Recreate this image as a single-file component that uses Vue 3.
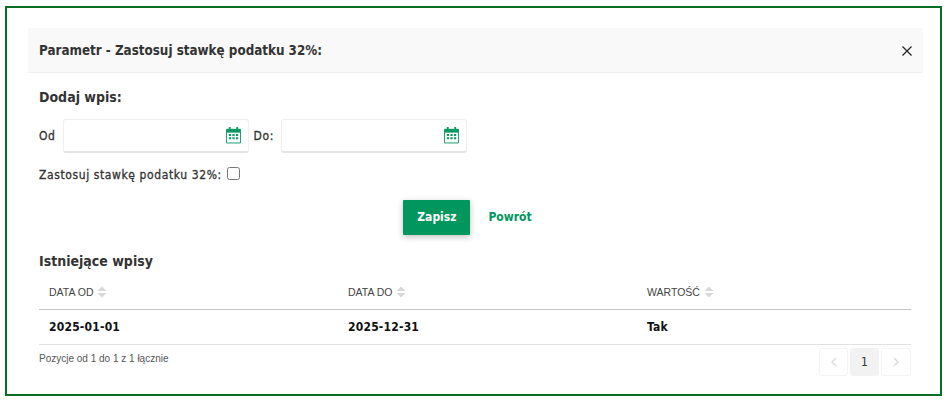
<template>
  <div class="frame">
    <div class="modal">
      <div class="modal-header">
        <span class="modal-title">Parametr - Zastosuj stawkę podatku 32%:</span>
        <button class="close-btn" aria-label="Zamknij">
          <svg width="10" height="10" viewBox="0 0 10 10">
            <path d="M0.5 0.5L9.5 9.5M9.5 0.5L0.5 9.5" stroke="#222" stroke-width="1.2" fill="none" />
          </svg>
        </button>
      </div>

      <div class="modal-body">
        <h3 class="section-title">Dodaj wpis:</h3>

        <div class="date-row">
          <label class="field-label">Od</label>
          <div class="date-input">
            <svg class="cal" width="15" height="18" viewBox="0 0 16 18">
              <path d="M0.5 3h15v14.5H0.5z" fill="#fff" stroke="#0d9a62" />
              <path d="M0.5 2.5h15V6.5H0.5z" fill="#0d9a62" />
              <path d="M4 0.5v3M12 0.5v3" stroke="#0d9a62" stroke-width="2" />
              <path d="M3 8h2.4v2H3zM6.8 8h2.4v2H6.8zM10.6 8H13v2h-2.4zM3 11.4h2.4v2H3zM6.8 11.4h2.4v2H6.8zM10.6 11.4H13v2h-2.4z" fill="#0d9a62" />
            </svg>
          </div>
          <label class="field-label">Do:</label>
          <div class="date-input">
            <svg class="cal" width="15" height="18" viewBox="0 0 16 18">
              <path d="M0.5 3h15v14.5H0.5z" fill="#fff" stroke="#0d9a62" />
              <path d="M0.5 2.5h15V6.5H0.5z" fill="#0d9a62" />
              <path d="M4 0.5v3M12 0.5v3" stroke="#0d9a62" stroke-width="2" />
              <path d="M3 8h2.4v2H3zM6.8 8h2.4v2H6.8zM10.6 8H13v2h-2.4zM3 11.4h2.4v2H3zM6.8 11.4h2.4v2H6.8zM10.6 11.4H13v2h-2.4z" fill="#0d9a62" />
            </svg>
          </div>
        </div>

        <div class="check-row">
          <label class="field-label">Zastosuj stawkę podatku 32%:</label>
          <input type="checkbox" class="check" />
        </div>

        <div class="actions">
          <button class="btn-save">Zapisz</button>
          <button class="btn-back">Powrót</button>
        </div>

        <h3 class="section-title list-title">Istniejące wpisy</h3>

        <table class="entries">
          <colgroup>
            <col class="col-wide" />
            <col class="col-wide" />
            <col />
          </colgroup>
          <thead>
            <tr>
              <th v-for="col in columns" :key="col">
                {{ col }}
                <svg class="sort" width="10" height="12" viewBox="0 0 10 12">
                  <path d="M5 0.5L9.5 5H0.5z" fill="#d8d8d8" />
                  <path d="M5 11.5L9.5 7H0.5z" fill="#d8d8d8" />
                </svg>
              </th>
            </tr>
          </thead>
          <tbody>
            <tr v-for="row in rows" :key="row.from">
              <td>{{ row.from }}</td>
              <td>{{ row.to }}</td>
              <td>{{ row.value }}</td>
            </tr>
          </tbody>
        </table>

        <div class="table-footer">
          <span class="info">Pozycje od 1 do 1 z 1 łącznie</span>
          <div class="pager">
            <span class="page nav">
              <svg width="6" height="10" viewBox="0 0 6 10"><path d="M5 1L1 5l4 4" stroke="#ddd" stroke-width="1.5" fill="none" /></svg>
            </span>
            <span class="page current">1</span>
            <span class="page nav">
              <svg width="6" height="10" viewBox="0 0 6 10"><path d="M1 1l4 4-4 4" stroke="#ddd" stroke-width="1.5" fill="none" /></svg>
            </span>
          </div>
        </div>
      </div>
    </div>
  </div>
</template>

<script setup>
const columns = ['DATA OD', 'DATA DO', 'WARTOŚĆ']

const rows = [
  { from: '2025-01-01', to: '2025-12-31', value: 'Tak' },
]
</script>

<style>
body {
  background: #fff;
}
</style>

<style scoped>
.frame {
  box-sizing: border-box;
  width: 937px;
  height: 390px;
  margin: 6px 0 0 5px;
  padding: 20px 17px 0 21px;
  border: 2px solid #0b6e25;
  font-family: 'DejaVu Sans', 'Noto Sans', sans-serif;
  font-stretch: condensed;
  color: #333;
}

.modal-header {
  display: flex;
  align-items: center;
  justify-content: space-between;
  height: 44px;
  padding: 0 11px 0 11px;
  background: #f9f9f9;
  border-bottom: 1px solid #f0f0f0;
}

.modal-title {
  font-size: 13.3px;
  font-weight: 700;
  color: #333;
}

.close-btn {
  display: flex;
  padding: 0;
  margin-top: 2px;
  border: none;
  background: none;
}

.modal-body {
  padding: 0 12px 0 11px;
}

.section-title {
  margin: 0;
  font-size: 14px;
  font-weight: 700;
  line-height: 22px;
  color: #333;
}

.modal-body > .section-title:first-child {
  margin-top: 13px;
}

.date-row {
  display: flex;
  align-items: center;
  margin-top: 11px;
}

.field-label {
  font-size: 12px;
  letter-spacing: 0.6px;
  color: #333;
  -webkit-text-stroke: 0.3px #333;
  margin-right: 7px;
}

.date-input {
  box-sizing: border-box;
  display: flex;
  align-items: center;
  justify-content: flex-end;
  width: 186px;
  height: 34px;
  padding-right: 7px;
  margin-right: 5px;
  background: #fff;
  border: 1px solid #eee;
  border-bottom: 2px solid #e4e4e4;
  border-radius: 3px;
}

.cal {
  margin-bottom: 2px;
}

.check-row {
  display: flex;
  align-items: center;
  margin-top: 14px;
}

.check-row .field-label {
  margin-right: 5px;
}

.check {
  width: 13px;
  height: 13px;
  margin: 0 0 2px;
}

.actions {
  display: flex;
  justify-content: center;
  align-items: center;
  margin-top: 18px;
  padding-right: 15px;
}

.btn-save {
  width: 67px;
  height: 35px;
  padding: 0 0 2px;
  border: none;
  border-radius: 1px;
  background: #00965e;
  color: #fff;
  font: inherit;
  font-size: 12px;
  font-weight: 700;
  box-shadow: 0 2px 6px rgba(0, 0, 0, 0.25);
}

.btn-back {
  margin-left: 18px;
  padding: 0 0 2px;
  border: none;
  background: none;
  color: #00965e;
  font: inherit;
  font-size: 12px;
  font-weight: 700;
}

.list-title {
  margin-top: 15px;
}

.entries {
  width: 100%;
  margin-top: 4px;
  border-collapse: collapse;
  table-layout: fixed;
}

.col-wide {
  width: 299px;
}

.entries th {
  height: 31px;
  padding: 0 10px 2px;
  font-family: 'Liberation Sans', Arial, sans-serif;
  font-size: 10.5px;
  font-weight: 400;
  text-align: left;
  color: #444;
  border-bottom: 1px solid #c4c4c4;
}

.sort {
  vertical-align: -2px;
  margin-left: 1px;
}

.entries td {
  height: 33px;
  padding: 0 10px 1px;
  font-size: 12px;
  letter-spacing: 0.2px;
  font-weight: 700;
  color: #111;
  border-bottom: 1px solid #e2e2e2;
}

.table-footer {
  display: flex;
  align-items: flex-start;
  justify-content: space-between;
  margin-top: 3px;
}

.info {
  margin-top: 5px;
  font-family: 'Liberation Sans', Arial, sans-serif;
  font-size: 10px;
  color: #555;
}

.pager {
  display: flex;
  gap: 2px;
}

.page {
  box-sizing: border-box;
  display: flex;
  align-items: center;
  justify-content: center;
  width: 29px;
  height: 28px;
  border: 1px solid #f4f4f4;
  border-radius: 3px;
  font-size: 12px;
  color: #333;
}

.page:last-child {
  width: 30px;
}

.page.current {
  background: #f2f2f2;
  border-color: #f2f2f2;
}
</style>
